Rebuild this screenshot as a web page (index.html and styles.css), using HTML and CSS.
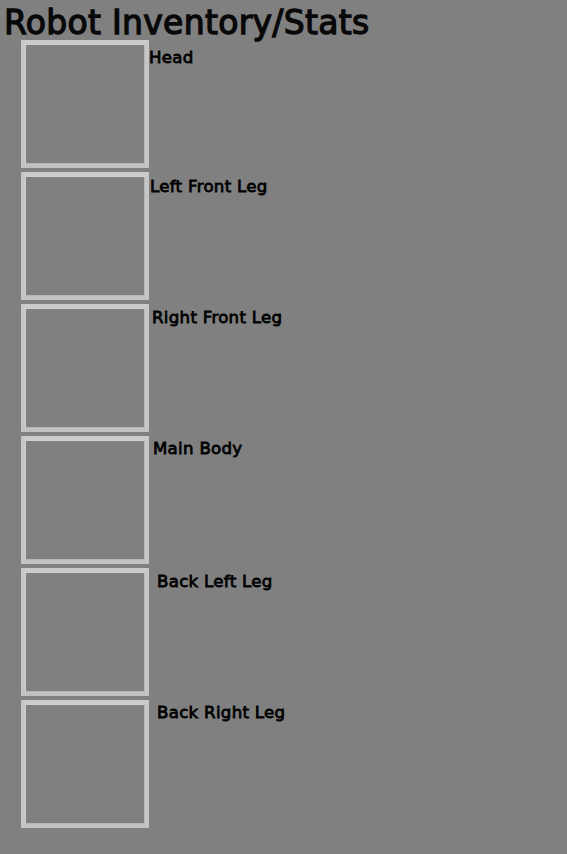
FILE: index.html
```html
<!DOCTYPE html>
<html>
<head>
<meta charset="utf-8">
<title>Robot Inventory/Stats</title>
<link rel="stylesheet" href="styles.css">
</head>
<body>
<h1 class="title">Robot Inventory/Stats</h1>
<div class="parts">
  <div class="part part-1"><div class="slot"></div><span class="label">Head</span></div>
  <div class="part part-2"><div class="slot"></div><span class="label">Left Front Leg</span></div>
  <div class="part part-3"><div class="slot"></div><span class="label">Right Front Leg</span></div>
  <div class="part part-4"><div class="slot"></div><span class="label">Main Body</span></div>
  <div class="part part-5"><div class="slot"></div><span class="label">Back Left Leg</span></div>
  <div class="part part-6"><div class="slot"></div><span class="label">Back Right Leg</span></div>
</div>
</body>
</html>
```
FILE: styles.css
```css
html, body {
  margin: 0;
  padding: 0;
  background: #808080;
  height: 100%;
}
body {
  font-family: "DejaVu Sans", sans-serif;
  color: #000;
}
.title {
  margin: 0;
  padding: 6px 0 0 4px;
  font-size: 33px;
  line-height: 34px;
  font-weight: normal;
  letter-spacing: 0.3px;
  -webkit-text-stroke: 1.3px #080808;
  color: #080808;
}
.parts {
  display: flex;
  flex-direction: column;
  gap: 4px;
  padding-left: 21px;
}
.part {
  display: flex;
  align-items: flex-start;
}
.slot {
  width: 128px;
  height: 128px;
  box-sizing: border-box;
  border: 4px solid #c6c6c6;
  border-top-color: #cbcbcb;
  border-bottom-color: #c2c2c2;
  box-shadow: inset 1px 1px 0 #d0d0d0, inset -1px -1px 0 #b6b6b6;
  flex: none;
}
.label {
  font-size: 16.6px;
  line-height: 19px;
  letter-spacing: 0.3px;
  -webkit-text-stroke: 0.8px #000;
  padding-top: 4px;
  margin-left: 1px;
}
.part-1 .label { margin-left: 0; padding-top: 8px; }
.part-2 .label { margin-left: 1px; padding-top: 5px; }
.part-3 .label { margin-left: 3px; }
.part-4 .label { margin-left: 4px; padding-top: 3px; }
.part-5 .label { margin-left: 8px; }
.part-6 .label { margin-left: 8px; padding-top: 3px; }
```
